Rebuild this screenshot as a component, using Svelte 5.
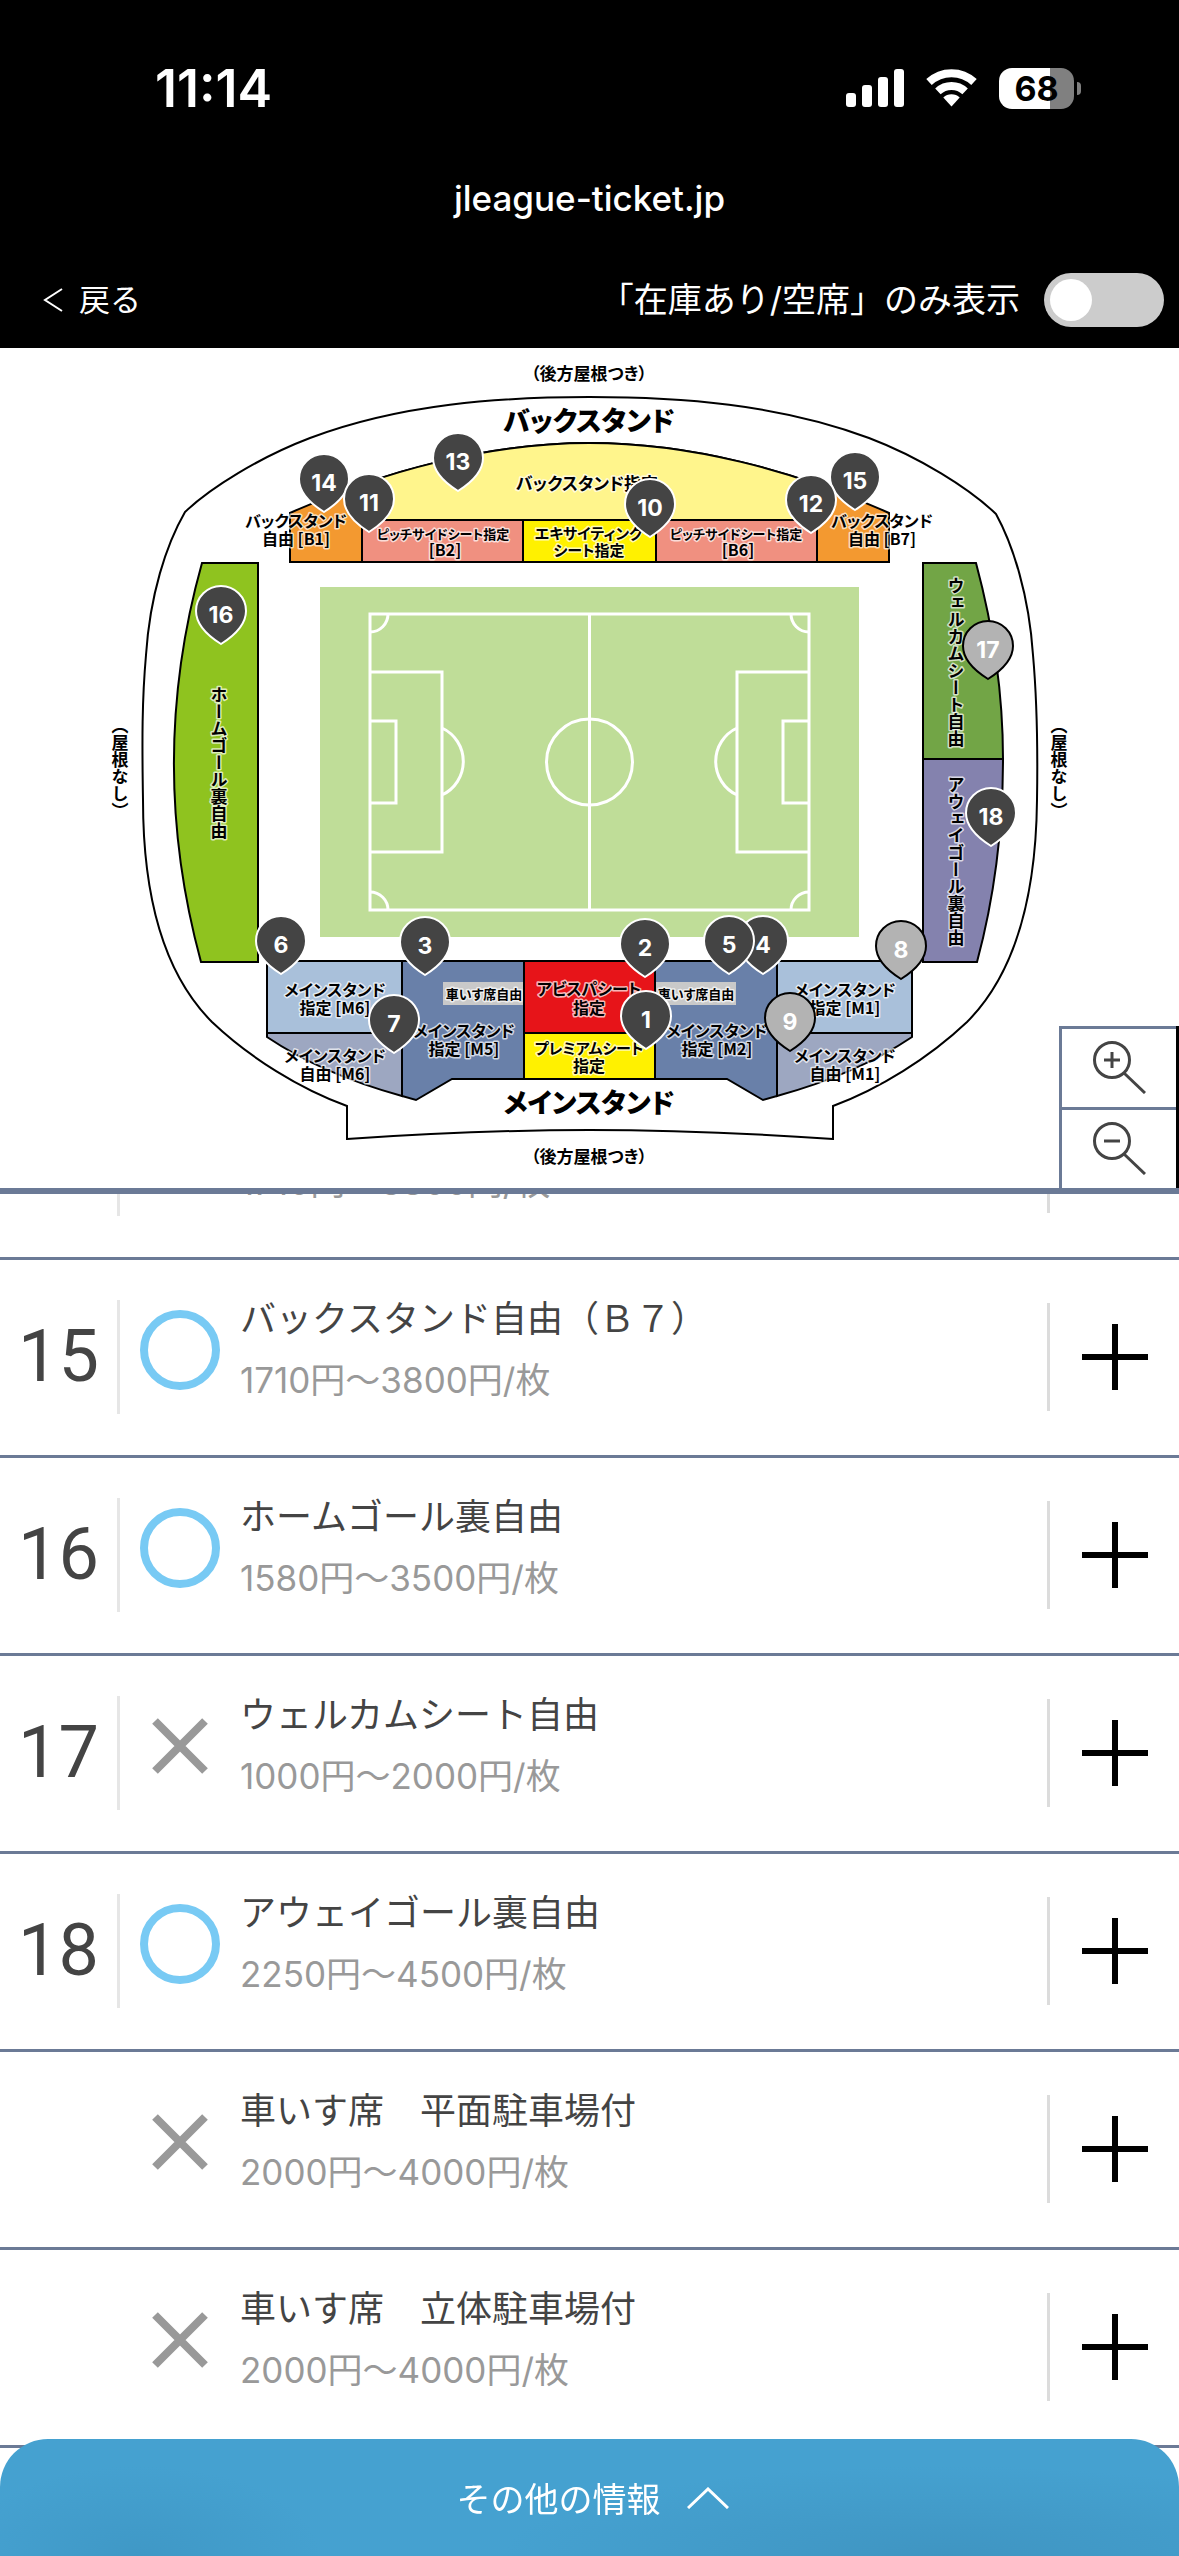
<script lang="ts">
  import { onMount } from "svelte";

  const seats = [
    { no: "14", open: true, name: "バックスタンド自由（Ｂ１）", price: "1710円〜3800円/枚" },
    { no: "15", open: true, name: "バックスタンド自由（Ｂ７）", price: "1710円〜3800円/枚" },
    { no: "16", open: true, name: "ホームゴール裏自由", price: "1580円〜3500円/枚" },
    { no: "17", open: false, name: "ウェルカムシート自由", price: "1000円〜2000円/枚" },
    { no: "18", open: true, name: "アウェイゴール裏自由", price: "2250円〜4500円/枚" },
    { no: "", open: false, name: "車いす席　平面駐車場付", price: "2000円〜4000円/枚" },
    { no: "", open: false, name: "車いす席　立体駐車場付", price: "2000円〜4000円/枚" },
  ];

  // x, y: centre of the pin head on the 1179 x 840 map
  const pins = [
    { no: 4, x: 763, y: 593 },
    { no: 5, x: 729, y: 593 },
    { no: 14, x: 324, y: 131 },
    { no: 11, x: 369, y: 151 },
    { no: 13, x: 458, y: 110 },
    { no: 10, x: 650, y: 156 },
    { no: 15, x: 855, y: 129 },
    { no: 12, x: 811, y: 152 },
    { no: 16, x: 221, y: 263 },
    { no: 17, x: 988, y: 298, sold: true },
    { no: 18, x: 991, y: 465 },
    { no: 6, x: 281, y: 593 },
    { no: 3, x: 425, y: 594 },
    { no: 2, x: 645, y: 596 },
    { no: 8, x: 901, y: 598, sold: true },
    { no: 7, x: 394, y: 672 },
    { no: 1, x: 646, y: 668 },
    { no: 9, x: 790, y: 670, sold: true },
  ];

  const labels = [
    { x: 587, y: 484, t: "バックスタンド指定", c: "l" },
    { x: 296, y: 521, t: "バックスタンド" },
    { x: 296, y: 539, t: "自由 [B1]" },
    { x: 882, y: 521, t: "バックスタンド" },
    { x: 882, y: 539, t: "自由 [B7]" },
    { x: 443, y: 533, t: "ピッチサイドシート指定", c: "xs" },
    { x: 445, y: 550, t: "[B2]" },
    { x: 589, y: 533, t: "エキサイティング", c: "s" },
    { x: 589, y: 550, t: "シート指定", c: "s" },
    { x: 736, y: 533, t: "ピッチサイドシート指定", c: "xs" },
    { x: 738, y: 550, t: "[B6]" },
    { x: 335, y: 990, t: "メインスタンド" },
    { x: 335, y: 1008, t: "指定 [M6]" },
    { x: 335, y: 1056, t: "メインスタンド" },
    { x: 335, y: 1074, t: "自由 [M6]" },
    { x: 464, y: 1031, t: "メインスタンド" },
    { x: 464, y: 1049, t: "指定 [M5]" },
    { x: 717, y: 1031, t: "メインスタンド" },
    { x: 717, y: 1049, t: "指定 [M2]" },
    { x: 845, y: 990, t: "メインスタンド" },
    { x: 845, y: 1008, t: "指定 [M1]" },
    { x: 845, y: 1056, t: "メインスタンド" },
    { x: 845, y: 1074, t: "自由 [M1]" },
    { x: 484, y: 993, t: "車いす席自由", c: "xs" },
    { x: 696, y: 993, t: "車いす席自由", c: "xs" },
    { x: 589, y: 989, t: "アビスパシート" },
    { x: 589, y: 1008, t: "指定" },
    { x: 589, y: 1048, t: "プレミアムシート", c: "s" },
    { x: 589, y: 1066, t: "指定" },
  ];

  let onlyOpen = $state(false);
  let list: HTMLElement;
  const shown = $derived(onlyOpen ? seats.filter((s) => s.open) : seats);

  onMount(() => {
    list.scrollTop = 132;
  });
</script>

{#snippet half()}
  <path fill="#a9c0da" d="M267 961H402V1033H267Z" />
  <path fill="#9da7c1" d="M267 1033H402V1096Q322 1074 267 1037Z" />
  <path fill="#6980a9" d="M402 961H524V1079H452L416 1100L402 1096Z" />
  <path fill="#c9c9c9" stroke="none" d="M443 982H523V1005H443Z" />
{/snippet}

{#snippet goal()}
  <path d="M370 672H442V852H370M370 721H396V803H370M442 728A37 37 0 0 1 442 795M388 614A18 18 0 0 1 370 632M388 910A18 18 0 0 0 370 892" />
{/snippet}

<div class="page">
  <header>
    <div class="status">
      <span class="time">11:14</span>
      <div class="icons">
        <svg width="58" height="38" viewBox="0 0 58 38" fill="#fff" aria-hidden="true">
          <rect x="0" y="24" width="10" height="14" rx="3" />
          <rect x="16" y="16" width="10" height="22" rx="3" />
          <rect x="32" y="8" width="10" height="30" rx="3" />
          <rect x="48" y="0" width="10" height="38" rx="3" />
        </svg>
        <svg width="51" height="38" viewBox="0 0 51 38" fill="none" stroke="#fff" stroke-width="8" aria-hidden="true">
          <path d="M3 13A33 33 0 0 1 48 13" />
          <path d="M11.900 22.400A20 20 0 0 1 39.100 22.400" />
          <path fill="#fff" stroke="none" d="M25.500 37.500L17.300 28.500A12 12 0 0 1 33.700 28.500Z" />
        </svg>
        <div class="battery"><span>68</span></div>
      </div>
    </div>
    <div class="url">jleague-ticket.jp</div>
    <div class="bar">
      <a class="back" href="#back">
        <svg width="21" height="24" viewBox="0 0 21 24" aria-hidden="true"><path d="M20 1L3 12L20 23" fill="none" stroke="#fff" stroke-width="2" /></svg>
        戻る
      </a>
      <label class="switch">
        <span>「在庫あり/空席」のみ表示</span>
        <input type="checkbox" bind:checked={onlyOpen} />
      </label>
    </div>
  </header>

  <section class="map">
    <svg class="stadium" viewBox="0 348 1179 840">
      <g fill="none" stroke="#000" stroke-width="2">
        <path d="M347 1139V1106C300 1089 250 1058 212 1022C165 975 143 900 143 800C142 740 142 700 146 655C150 595 166 545 185 512C210 488 260 457 310 438C400 404 500 397 589.500 397C679 397 779 404 869 438C919 457 969 488 996 514C1013 545 1029 595 1033 655C1037 700 1038 740 1037 800C1036 900 1014 975 967 1022C929 1058 879 1089 833 1106V1139Q700 1130 589.500 1130Q479 1130 347 1139Z" />
        <clipPath id="mid"><path d="M362 430H817V562H362Z" /></clipPath>
        <path fill="#f39930" d="M290 562V513C385 470 490 443 589.500 443S794 470 889 513V562Z" />
        <path fill="#fff58c" clip-path="url(#mid)" d="M290 562V513C385 470 490 443 589.500 443S794 470 889 513V562Z" />
        <path fill="#f09080" d="M362 520H523V562H362ZM656 520H817V562H656Z" />
        <path fill="#fff100" d="M523 520H656V562H523Z" />
        <path d="M362 484V562M817 484V562" />
        <path fill="#8fc31f" d="M202 563H258V962H201C165 830 165 695 202 563Z" />
        <path fill="#72a546" d="M923 563H976C994 630 1003 695 1003 759H923Z" />
        <path fill="#8482ae" d="M923 759H1003C1003 825 995 895 977 962H923Z" />
        {@render half()}
        <g transform="translate(1179 0) scale(-1 1)">{@render half()}</g>
        <path fill="#e71419" d="M524 961H655V1033H524Z" />
        <path fill="#fff100" d="M524 1033H655V1079H524Z" />
      </g>
      <path fill="#bfdd98" d="M320 587H859V937H320Z" />
      <g fill="none" stroke="#fff" stroke-width="3">
        <path d="M370 614H809V910H370ZM589.500 614V910" />
        <circle cx="589.500" cy="762" r="43" />
        {@render goal()}
        <g transform="translate(1179 0) scale(-1 1)">{@render goal()}</g>
      </g>
      <g class="plain">
        <text x="589" y="380">（後方屋根つき）</text>
        <text x="589" y="1163">（後方屋根つき）</text>
        <text class="big" x="589" y="431">バックスタンド</text>
        <text class="big" x="589" y="1113">メインスタンド</text>
        <text class="v" x="120" y="768">（屋根なし）</text>
        <text class="v" x="1059" y="768">（屋根なし）</text>
      </g>
      <g class="label">
        {#each labels as l}
          <text class={l.c} x={l.x} y={l.y + 6}>{l.t}</text>
        {/each}
        <text class="v" x="219" y="763">ホームゴール裏自由</text>
        <text class="v" x="956" y="662">ウェルカムシート自由</text>
        <text class="v" x="956" y="861">アウェイゴール裏自由</text>
      </g>
    </svg>
    {#each pins as p}
      <button
        class="pin"
        class:sold={p.sold}
        style="left: {(p.x / 1179) * 100}%; top: {(p.y / 840) * 100}%"
      >
        <svg width="54" height="62" viewBox="-27 -27 54 62" aria-hidden="true">
          <path d="M0 33C-16 23 -25 12 -25 0A25 25 0 0 1 25 0C25 12 16 23 0 33Z" />
        </svg>
        <span>{p.no}</span>
      </button>
    {/each}
    <div class="zoom">
      {#each [true, false] as plus}
        <button aria-label={plus ? "拡大" : "縮小"}>
          <svg width="54" height="54" viewBox="0 0 54 54" fill="none" stroke="#444" stroke-width="3" aria-hidden="true">
            <circle cx="20" cy="20" r="17.500" />
            <path d={plus ? "M12 20H28M20 12V28" : "M12 20H28"} />
            <path d="M32 33L53 53" />
          </svg>
        </button>
      {/each}
    </div>
  </section>

  <ul class="list" bind:this={list}>
    {#each shown as s}
      <li>
        <div class="no" class:line={s.no}>{s.no}</div>
        <div class="mark">
          <svg width="80" height="80" viewBox="0 0 80 80" fill="none" aria-hidden="true">
            {#if s.open}
              <circle cx="40" cy="40" r="36" stroke="#78caf4" stroke-width="8" />
            {:else}
              <path d="M15 15L65 65M65 15L15 65" stroke="#999" stroke-width="8" />
            {/if}
          </svg>
        </div>
        <div class="info">
          <div class="name">{s.name}</div>
          <div class="price">{s.price}</div>
        </div>
        <button class="more" aria-label="開く">
          <svg width="66" height="66" viewBox="0 0 66 66" aria-hidden="true"><path d="M0 33H66M33 0V66" stroke="#000" stroke-width="6" /></svg>
        </button>
      </li>
    {/each}
  </ul>

  <button class="other">
    その他の情報
    <svg width="42" height="22" viewBox="0 0 42 22" aria-hidden="true"><path d="M1 21L21 2L41 21" fill="none" stroke="#fff" stroke-width="3" /></svg>
  </button>
</div>

<style>
  :global(body) {
    background: #fff;
  }

  .page {
    display: flex;
    flex-direction: column;
    height: 100vh;
    font-family: Inter, "Noto Sans CJK JP", sans-serif;
    color: #444;
  }

  button {
    margin: 0;
    padding: 0;
    border: 0;
    background: none;
    font: inherit;
    color: inherit;
    cursor: pointer;
  }

  svg {
    display: block;
    flex: none;
  }

  header {
    background: #000;
    color: #fff;
  }

  .status {
    display: flex;
    justify-content: space-between;
    align-items: center;
    height: 176px;
    box-sizing: border-box;
    padding: 0 105px 0 155px;
  }

  .time {
    font-size: 52px;
    font-weight: 600;
  }

  .icons {
    display: flex;
    align-items: center;
    gap: 22px;
  }

  .battery {
    position: relative;
    display: flex;
    justify-content: center;
    width: 75px;
    height: 41px;
    border-radius: 13px;
    background: linear-gradient(90deg, #fff 68%, #808080 68%);
    color: #000;
    font-size: 34px;
    font-weight: 700;
    line-height: 41px;
  }

  .battery::after {
    content: "";
    position: absolute;
    left: 78px;
    top: 14px;
    width: 4px;
    height: 13px;
    border-radius: 0 4px 4px 0;
    background: #808080;
  }

  .url {
    height: 80px;
    line-height: 44px;
    text-align: center;
    font-size: 35px;
    font-weight: 500;
  }

  .bar {
    display: flex;
    justify-content: space-between;
    align-items: center;
    height: 88px;
    padding: 0 15px 4px 42px;
  }

  .back {
    display: flex;
    align-items: center;
    gap: 16px;
    color: #fff;
    font-size: 31px;
    line-height: 44px;
    text-decoration: none;
  }

  .switch {
    display: flex;
    align-items: center;
    gap: 24px;
    font-size: 34px;
    line-height: 48px;
    cursor: pointer;
  }

  .switch input {
    appearance: none;
    box-sizing: border-box;
    width: 120px;
    height: 54px;
    margin: 0;
    padding: 6px;
    border-radius: 27px;
    background: #ccc;
    cursor: pointer;
  }

  .switch input::before {
    content: "";
    display: block;
    width: 42px;
    height: 42px;
    border-radius: 50%;
    background: #fff;
  }

  .switch input:checked {
    background: #45a1d0;
  }

  .switch input:checked::before {
    margin-left: auto;
  }

  .map {
    position: relative;
    border-bottom: 6px solid #6b7a96;
  }

  .stadium {
    width: 100%;
  }

  .stadium text {
    text-anchor: middle;
    font-family: "Noto Sans CJK JP", sans-serif;
    font-feature-settings: "palt";
    fill: #000;
  }

  .plain {
    font-size: 17px;
    font-weight: 700;
  }

  .plain .big {
    font-size: 27px;
    font-weight: 900;
  }

  .stadium .v {
    writing-mode: vertical-rl;
    font-size: 17px;
    font-feature-settings: normal;
  }

  .label {
    font-size: 16px;
    font-weight: 700;
    stroke: #fff;
    stroke-width: 3px;
    stroke-opacity: 0.7;
    stroke-linejoin: round;
    paint-order: stroke;
  }

  .label .l {
    font-size: 17px;
  }

  .label .s {
    font-size: 15px;
  }

  .label .xs {
    font-size: 13px;
  }

  .pin {
    position: absolute;
    width: 54px;
    height: 62px;
    margin: -27px 0 0 -27px;
    color: #fff;
    font-size: 23px;
    font-weight: 700;
  }

  .pin path {
    fill: #444;
    stroke: #fff;
    stroke-width: 2px;
  }

  .pin.sold path {
    fill: #b3b3b3;
    stroke: #000;
  }

  .pin span {
    position: absolute;
    inset: 16px 0 auto;
    line-height: 30px;
  }

  .zoom {
    position: absolute;
    right: 0;
    bottom: 0;
    display: flex;
    flex-direction: column;
    width: 114px;
    border-left: 3px solid #6b7a96;
    border-right: 3px solid #000;
    background: #fff;
  }

  .zoom button {
    display: flex;
    justify-content: center;
    height: 81px;
    padding-top: 11px;
    border-top: 3px solid #6b7a96;
  }

  .list {
    flex: 1;
    min-height: 0;
    margin: 0;
    padding: 0 0 150px;
    overflow-y: auto;
    scrollbar-width: none;
    list-style: none;
  }

  li {
    display: flex;
    align-items: center;
    height: 193px;
    padding-bottom: 2px;
    border-bottom: 3px solid #6b7a96;
  }

  .no {
    box-sizing: border-box;
    width: 120px;
    height: 114px;
    border-right: 3px solid transparent;
    text-align: center;
    font-family: Roboto, sans-serif;
    font-size: 72px;
    line-height: 114px;
  }

  .no.line {
    border-color: #e6e6e6;
  }

  .mark {
    padding: 0 20px 13px;
  }

  .info {
    flex: 1;
    padding-bottom: 13px;
  }

  .name {
    font-size: 36px;
    line-height: 60px;
  }

  .price {
    color: #999;
    font-size: 35px;
    line-height: 62px;
  }

  .more {
    display: flex;
    align-items: center;
    width: 132px;
    height: 108px;
    padding-left: 32px;
    border-left: 3px solid #dcdcdc;
  }

  .other {
    position: fixed;
    inset: auto 0 0;
    display: flex;
    justify-content: center;
    align-items: center;
    gap: 26px;
    height: 117px;
    padding-left: 6px;
    border-radius: 48px 48px 0 0;
    background:
      radial-gradient(ellipse 180px 90px at 140px 117px, #3f98c6, transparent),
      radial-gradient(ellipse 440px 90px at 80% 117px, #3f95c2, transparent),
      #45a1d0;
    color: #fff;
    font-size: 34px;
  }
</style>
